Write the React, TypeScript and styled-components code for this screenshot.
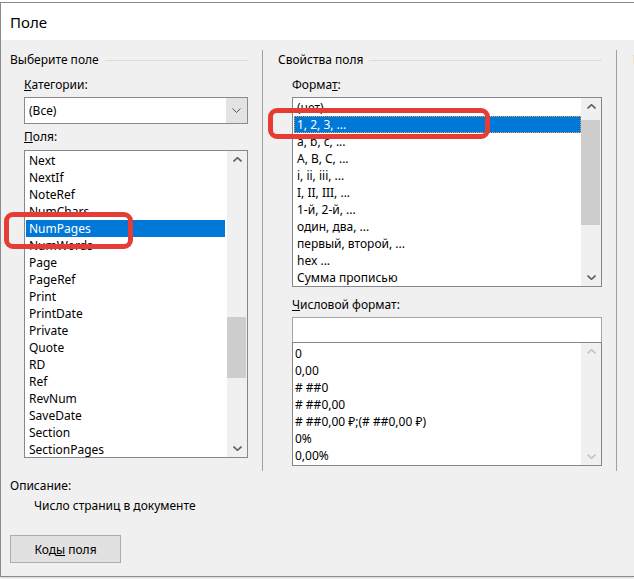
import React from 'react';
import styled, { createGlobalStyle } from 'styled-components';

const GlobalStyle = createGlobalStyle`
  html, body {
    margin: 0;
    padding: 0;
    background: #ffffff;
  }
  body {
    font-family: 'Noto Sans', 'Segoe UI', sans-serif;
    font-size: 12px;
    color: #000000;
  }
`;

const fields = [
  'Next',
  'NextIf',
  'NoteRef',
  'NumChars',
  'NumPages',
  'NumWords',
  'Page',
  'PageRef',
  'Print',
  'PrintDate',
  'Private',
  'Quote',
  'RD',
  'Ref',
  'RevNum',
  'SaveDate',
  'Section',
  'SectionPages',
];

const formats = [
  '(нет)',
  '1, 2, 3, ...',
  'a, b, c, ...',
  'A, B, C, ...',
  'i, ii, iii, ...',
  'I, II, III, ...',
  '1-й, 2-й, ...',
  'один, два, ...',
  'первый, второй, ...',
  'hex ...',
  'Сумма прописью',
];

const numberFormats = ['0', '0,00', '# ##0', '# ##0,00', '# ##0,00 ₽;(# ##0,00 ₽)', '0%', '0,00%'];

function Chevron({ up, color }: { up?: boolean; color: string }) {
  return (
    <svg width="9" height="5" viewBox="0 0 9 5">
      <polyline
        points={up ? '0.5,4.5 4.5,0.7 8.5,4.5' : '0.5,0.5 4.5,4.3 8.5,0.5'}
        fill="none"
        stroke={color}
        strokeWidth="1.6"
      />
    </svg>
  );
}

interface ScrollProps {
  thumbTop?: number;
  thumbHeight?: number;
  disabled?: boolean;
}

function ScrollBar({ thumbTop, thumbHeight, disabled }: ScrollProps) {
  const color = disabled ? '#c4c4c4' : '#606060';
  return (
    <St.Scrollbar>
      <St.Arrow>
        <Chevron up color={color} />
      </St.Arrow>
      <St.Track>{thumbHeight ? <St.Thumb $top={thumbTop || 0} $height={thumbHeight} /> : null}</St.Track>
      <St.Arrow>
        <Chevron color={color} />
      </St.Arrow>
    </St.Scrollbar>
  );
}

function App() {
  return (
    <St.Screen>
      <GlobalStyle />
      <St.Window>
        <St.TitleBar>Поле</St.TitleBar>
        <St.Body>
          <St.Columns>
            <St.Panel $width={238}>
              <St.GroupHeader>
                <span>Выберите поле</span>
                <St.GroupLine />
              </St.GroupHeader>
              <St.Indent>
                <St.FieldLabel $top={9} $bottom={4}>
                  <u>К</u>атегории:
                </St.FieldLabel>
                <St.Combo>
                  <St.ComboText>(Все)</St.ComboText>
                  <St.ComboButton>
                    <svg width="9" height="5" viewBox="0 0 9 5">
                      <polyline points="0.5,0.5 4.5,4.5 8.5,0.5" fill="none" stroke="#555" strokeWidth="1" />
                    </svg>
                  </St.ComboButton>
                </St.Combo>
                <St.FieldLabel $top={5} $bottom={5}>
                  <u>П</u>оля:
                </St.FieldLabel>
                <St.ListBox $height={308}>
                  <St.Items $padTop={1} $padRight={2}>
                    {fields.map(name => (
                      <St.Row key={name} $indent={3} $selected={name === 'NumPages'}>
                        {name}
                      </St.Row>
                    ))}
                  </St.Items>
                  <ScrollBar thumbTop={149} thumbHeight={61} />
                </St.ListBox>
              </St.Indent>
            </St.Panel>

            <St.Divider $left={14} $right={15} />

            <St.Panel $width={324}>
              <St.GroupHeader>
                <span>Свойства поля</span>
                <St.GroupLine />
              </St.GroupHeader>
              <St.Indent>
                <St.FieldLabel $top={9} $bottom={4}>
                  Форма<u>т</u>:
                </St.FieldLabel>
                <St.ListBox $height={190}>
                  <St.Items $padTop={1} $padRight={0}>
                    {formats.map(name => (
                      <St.Row key={name} $indent={3} $selected={name === '1, 2, 3, ...'} $focused>
                        {name}
                      </St.Row>
                    ))}
                  </St.Items>
                  <ScrollBar thumbTop={5} thumbHeight={105} />
                </St.ListBox>
                <St.FieldLabel $top={10} $bottom={4}>
                  <u>Ч</u>исловой формат:
                </St.FieldLabel>
                <St.TextInput />
                <St.ListBox $height={124} $overlap>
                  <St.Items $padTop={2} $padRight={0}>
                    {numberFormats.map(name => (
                      <St.Row key={name} $indent={1}>
                        {name}
                      </St.Row>
                    ))}
                  </St.Items>
                  <ScrollBar disabled />
                </St.ListBox>
              </St.Indent>
            </St.Panel>

            <St.Divider $left={14} $right={16} />

            <St.Panel $width={200}>
              <St.GroupHeader>
                <span>Параметры поля</span>
              </St.GroupHeader>
            </St.Panel>
          </St.Columns>

          <St.Caption>Описание:</St.Caption>
          <St.Description>Число страниц в документе</St.Description>
          <St.Button type="button">
            Код<u>ы</u> поля
          </St.Button>
        </St.Body>
      </St.Window>

      <St.Mark $x={4} $y={212} $w={129} $h={37} />
      <St.Mark $x={268} $y={108} $w={222} $h={31} />
    </St.Screen>
  );
}

export default App;

const St = {
  Screen: styled.div`
    position: relative;
    box-sizing: border-box;
    overflow: hidden;
    padding-top: 2px;
    width: 634px;
    height: 579px;
  `,
  Window: styled.div`
    display: flex;
    flex-direction: column;
    box-sizing: border-box;
    border: 1px solid #8a8a8a;
    border-right: none;
    background-color: #f0f0f0;
    height: 575px;
    box-shadow: 0 2px 2px rgba(0, 0, 0, 0.12);
  `,
  TitleBar: styled.div`
    display: flex;
    align-items: center;
    flex-shrink: 0;
    background-color: #ffffff;
    padding-left: 9px;
    height: 37px;
    font-size: 15px;
  `,
  Body: styled.div`
    display: flex;
    flex: 1;
    flex-direction: column;
    padding: 10px 0 0 9px;
  `,
  Columns: styled.div`
    display: flex;
    height: 421px;
  `,
  Panel: styled.div<{ $width: number }>`
    display: flex;
    flex-direction: column;
    flex-shrink: 0;
    padding-top: 2px;
    width: ${p => p.$width}px;
  `,
  Divider: styled.div<{ $left: number; $right: number }>`
    flex-shrink: 0;
    margin: 0 ${p => p.$right}px 0 ${p => p.$left}px;
    background-color: #a0a0a0;
    width: 1px;
  `,
  GroupHeader: styled.div`
    display: flex;
    align-items: center;
    height: 16px;
    line-height: 16px;
    white-space: nowrap;
  `,
  GroupLine: styled.div`
    flex: 1;
    margin-left: 6px;
    background-color: #dcdcdc;
    height: 1px;
  `,
  Indent: styled.div`
    display: flex;
    flex-direction: column;
    padding-left: 14px;
  `,
  FieldLabel: styled.div<{ $top: number; $bottom: number }>`
    margin: ${p => p.$top}px 0 ${p => p.$bottom}px;
    height: 16px;
    line-height: 16px;
  `,
  Combo: styled.div`
    display: flex;
    box-sizing: border-box;
    border: 1px solid #8a8a8a;
    background-color: #ffffff;
    height: 27px;
  `,
  ComboText: styled.div`
    flex: 1;
    padding-left: 4px;
    line-height: 25px;
  `,
  ComboButton: styled.div`
    display: flex;
    align-items: center;
    justify-content: center;
    background-color: #e3e3e3;
    width: 21px;
  `,
  ListBox: styled.div<{ $height: number; $overlap?: boolean }>`
    display: flex;
    box-sizing: border-box;
    overflow: hidden;
    margin-top: ${p => (p.$overlap ? -1 : 0)}px;
    border: 1px solid #828790;
    background-color: #ffffff;
    height: ${p => p.$height}px;
  `,
  Items: styled.div<{ $padTop: number; $padRight: number }>`
    display: flex;
    flex: 1;
    flex-direction: column;
    overflow: hidden;
    padding: ${p => p.$padTop}px ${p => p.$padRight}px 0 1px;
  `,
  Row: styled.div<{ $indent: number; $selected?: boolean; $focused?: boolean }>`
    flex-shrink: 0;
    box-sizing: border-box;
    padding-left: ${p => p.$indent}px;
    height: 17px;
    line-height: 17px;
    white-space: nowrap;
    background-color: ${p => (p.$selected ? '#0078d7' : 'transparent')};
    color: ${p => (p.$selected ? '#ffffff' : '#000000')};
    outline: ${p => (p.$selected && p.$focused ? '1px dotted #f0a040' : 'none')};
    outline-offset: -1px;
  `,
  Scrollbar: styled.div`
    display: flex;
    flex-direction: column;
    flex-shrink: 0;
    background-color: #f0f0f0;
    width: 20px;
  `,
  Arrow: styled.div`
    display: flex;
    align-items: center;
    justify-content: center;
    height: 17px;
  `,
  Track: styled.div`
    flex: 1;
  `,
  Thumb: styled.div<{ $top: number; $height: number }>`
    margin: ${p => p.$top}px 1px 0 0;
    background-color: #cdcdcd;
    height: ${p => p.$height}px;
  `,
  TextInput: styled.div`
    box-sizing: border-box;
    border: 1px solid #a6a6a6;
    background-color: #ffffff;
    height: 26px;
  `,
  Caption: styled.div`
    margin-top: 7px;
    height: 16px;
    line-height: 16px;
  `,
  Description: styled.div`
    margin-top: 4px;
    padding-left: 24px;
    height: 16px;
    line-height: 16px;
  `,
  Button: styled.button`
    margin-top: 21px;
    border: 1px solid #adadad;
    background-color: #e1e1e1;
    padding: 0;
    width: 111px;
    height: 28px;
    font-family: inherit;
    font-size: 12px;
    color: #000000;
  `,
  Mark: styled.div<{ $x: number; $y: number; $w: number; $h: number }>`
    position: absolute;
    left: ${p => p.$x}px;
    top: ${p => p.$y}px;
    box-sizing: border-box;
    border: 5px solid #e53d36;
    border-radius: 9px;
    width: ${p => p.$w}px;
    height: ${p => p.$h}px;
  `,
};
